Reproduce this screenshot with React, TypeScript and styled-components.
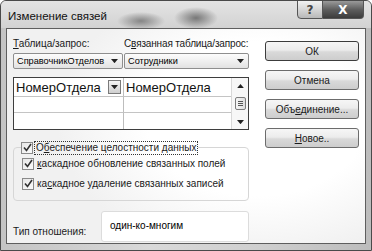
import styled, { createGlobalStyle } from "styled-components";

const GlobalStyle = createGlobalStyle`
  html, body { margin: 0; padding: 0; background: #ffffff; }
  body { font-family: "Liberation Sans", Arial, sans-serif; color: #1a1a1a; }
`;

const Window = styled.div`
  width: 372px;
  height: 251px;
  box-sizing: border-box;
  display: flex;
  flex-direction: column;
  border: 1px solid #4a4a4a;
  border-radius: 6px 6px 0 0;
  overflow: hidden;
  background: linear-gradient(90deg, #c4c4c4 0%, #d9d9d9 40%, #cfcfcf 70%, #bcbcbc 100%);
`;

const TitleBar = styled.div`
  height: 27px;
  display: flex;
  align-items: flex-start;
  padding-left: 7px;
  background:
    radial-gradient(ellipse 24px 9px at 140px 20px, #858585 0%, rgba(133,133,133,0) 100%),
    radial-gradient(ellipse 22px 11px at 195px 17px, #777 0%, rgba(119,119,119,0) 100%),
    linear-gradient(#e4e4e4 0%, #d2d2d2 100%);
`;

const Title = styled.span`
  font-family: "Liberation Sans", Arial, sans-serif;
  font-size: 11.5px;
  line-height: 30px;
  color: #111;
`;

const CaptionButtons = styled.div`
  margin-left: auto;
  margin-right: 7px;
  display: flex;
  margin-top: -1px;
`;

const CaptionButton = styled.div<{ $close?: boolean }>`
  width: ${(p) => (p.$close ? "41px" : "26px")};
  height: 19px;
  box-sizing: border-box;
  display: flex;
  align-items: center;
  justify-content: center;
  border: 1px solid #555;
  border-left: ${(p) => (p.$close ? "none" : "1px solid #555")};
  border-radius: ${(p) => (p.$close ? "0 0 4px 0" : "0 0 0 4px")};
  background: ${(p) =>
    p.$close
      ? "linear-gradient(#9a9a9a 0%, #5e5e5e 50%, #3c3c3c 100%)"
      : "linear-gradient(#f2f2f2 0%, #d6d6d6 50%, #b8b8b8 100%)"};
  color: ${(p) => (p.$close ? "#fff" : "#444")};
  font-family: "DejaVu Sans", sans-serif;
  font-weight: bold;
  font-size: 12px;
`;

const Body = styled.div`
  flex: 1;
  display: flex;
  padding: 0 5px 6px 5px;
`;

const Client = styled.div`
  flex: 1;
  display: flex;
  border: 1px solid #5e5e5e;
  padding: 8px 6px 0 6px;
  background: radial-gradient(ellipse 200px 140px at 250px 90px, #ffffff 55%, #f1f1f1 100%);
`;

const LeftColumn = styled.div`
  width: 236px;
  display: flex;
  flex-direction: column;
`;

const RightColumn = styled.div`
  margin-left: 16px;
  width: 94px;
  display: flex;
  flex-direction: column;
  gap: 9px;
  padding-top: 4px;
`;

const LabelRow = styled.div`
  display: grid;
  grid-template-columns: 111px 125px;
  height: 16px;
  font-size: 10px;
  line-height: 14px;
  white-space: nowrap;
  span:last-child {
    letter-spacing: -0.15px;
  }
`;

const ComboRow = styled.div`
  display: grid;
  grid-template-columns: 110px 125px;
  gap: 1px;
`;

const Combo = styled.div`
  height: 16px;
  box-sizing: border-box;
  display: flex;
  align-items: center;
  justify-content: space-between;
  padding: 0 4px 0 3px;
  border: 1px solid #8e8e8e;
  border-radius: 2px;
  background: linear-gradient(#fcfcfc 0%, #f0f0f0 50%, #e2e2e2 100%);
  font-size: 9.2px;
  color: #000;
  white-space: nowrap;
`;

const Arrow = ({ size = 7 }: { size?: number }) => (
  <svg width={size} height={size * 0.6} viewBox="0 0 10 6">
    <path d="M0 0 L10 0 L5 6 Z" fill="#222" />
  </svg>
);

const Grid = styled.div`
  margin-top: 8px;
  height: 53px;
  box-sizing: border-box;
  display: flex;
  border: 1px solid #3e3e3e;
  background: #fff;
`;

const Cells = styled.div`
  flex: 1;
  display: grid;
  grid-template-columns: 110px 1fr;
  grid-template-rows: 19px 16px 1fr;
`;

const Cell = styled.div<{ $last?: boolean }>`
  display: flex;
  align-items: center;
  padding-left: 2px;
  border-right: ${(p) => (p.$last ? "none" : "1px solid #bdbdbd")};
  border-bottom: 1px solid #c4c4c4;
  font-size: 13px;
  color: #111;
  &:nth-last-child(-n + 2) {
    border-bottom: none;
  }
`;

const DropButton = styled.div`
  margin-left: auto;
  margin-right: 2px;
  width: 13px;
  height: 14px;
  box-sizing: border-box;
  display: flex;
  align-items: center;
  justify-content: center;
  border: 1px solid #7a7a7a;
  background: linear-gradient(#f4f4f4, #cfcfcf);
`;

const Scrollbar = styled.div`
  width: 16px;
  border-left: 1px solid #d8d8d8;
  display: flex;
  flex-direction: column;
  align-items: center;
  justify-content: space-between;
  padding: 6px 0 5px;
  background: #f7f7f7;
`;

const Thumb = styled.div`
  width: 11px;
  height: 13px;
  box-sizing: border-box;
  border: 1px solid #7d7d7d;
  border-radius: 2px;
  background: linear-gradient(90deg, #f6f6f6, #dedede);
  display: flex;
  flex-direction: column;
  justify-content: center;
  align-items: center;
  gap: 1px;
  span {
    width: 5px;
    height: 1px;
    background: #555;
  }
`;

const Group = styled.fieldset`
  margin: 11px 0 0 0;
  padding: 0 0 0 8px;
  height: 60px;
  box-sizing: border-box;
  border: 1px solid #d6d6d6;
  border-radius: 4px;
  display: flex;
  flex-direction: column;
  gap: 7px;
`;

const Legend = styled.legend`
  padding: 0 1px 0 0;
  margin-left: -1px;
  margin-bottom: 3px;
`;

const CheckRow = styled.label<{ $focus?: boolean }>`
  display: flex;
  align-items: center;
  gap: 2px;
  height: 13px;
  font-size: 10px;
  color: #1a1a1a;
  white-space: nowrap;
  span {
    padding: 0 1px;
    outline: ${(p) => (p.$focus ? "1px dotted #333" : "none")};
    line-height: 12px;
  }
`;

const Box = styled.div`
  width: 12px;
  height: 12px;
  box-sizing: border-box;
  border: 1px solid #8a8a8a;
  background: linear-gradient(135deg, #e6e6e6, #fafafa);
  display: flex;
  align-items: center;
  justify-content: center;
`;

const CheckBox = () => (
  <Box>
    <svg width="9" height="9" viewBox="0 0 9 9">
      <path d="M1 4.5 L3.5 7.5 L8 1" stroke="#333" strokeWidth="1.6" fill="none" />
    </svg>
  </Box>
);

const RelationRow = styled.div`
  margin-top: 10px;
  display: flex;
  align-items: flex-end;
`;

const RelationLabel = styled.div`
  width: 88px;
  font-size: 10px;
  padding-bottom: 5px;
`;

const RelationBox = styled.div`
  width: 148px;
  height: 31px;
  box-sizing: border-box;
  border: 1px solid #dcdcdc;
  border-radius: 3px;
  background: #fff;
  padding: 8px 0 0 8px;
  font-size: 10px;
  color: #000;
`;

const Button = styled.div<{ $default?: boolean }>`
  height: 20px;
  box-sizing: border-box;
  display: flex;
  align-items: center;
  justify-content: center;
  border: 1px solid ${(p) => (p.$default ? "#3c3c3c" : "#6c6c6c")};
  border-radius: 3px;
  background: linear-gradient(#f6f6f6 0%, #ececec 45%, #d9d9d9 55%, #cdcdcd 100%);
  font-size: 10px;
  color: #1a1a1a;
`;

const Key = styled.u`
  text-decoration-thickness: 1px;
  text-underline-offset: 1px;
`;

export default function App() {
  return (
    <>
      <GlobalStyle />
      <Window>
        <TitleBar>
          <Title>Изменение связей</Title>
          <CaptionButtons>
            <CaptionButton>?</CaptionButton>
            <CaptionButton $close>X</CaptionButton>
          </CaptionButtons>
        </TitleBar>
        <Body>
          <Client>
            <LeftColumn>
              <LabelRow>
                <span>
                  <Key>Т</Key>аблица/запрос:
                </span>
                <span>
                  С<Key>в</Key>язанная таблица/запрос:
                </span>
              </LabelRow>
              <ComboRow>
                <Combo>
                  СправочникОтделов <Arrow />
                </Combo>
                <Combo>
                  Сотрудники <Arrow />
                </Combo>
              </ComboRow>
              <Grid>
                <Cells>
                  <Cell>
                    НомерОтдела
                    <DropButton>
                      <Arrow size={7} />
                    </DropButton>
                  </Cell>
                  <Cell $last>НомерОтдела</Cell>
                  <Cell />
                  <Cell $last />
                  <Cell />
                  <Cell $last />
                </Cells>
                <Scrollbar>
                  <svg width="7" height="4" viewBox="0 0 10 6">
                    <path d="M0 6 L10 6 L5 0 Z" fill="#222" />
                  </svg>
                  <Thumb>
                    <span />
                    <span />
                    <span />
                  </Thumb>
                  <Arrow size={7} />
                </Scrollbar>
              </Grid>
              <Group>
                <Legend>
                  <CheckRow $focus>
                    <CheckBox />
                    <span>
                      О<Key>б</Key>еспечение целостности данных
                    </span>
                  </CheckRow>
                </Legend>
                <CheckRow>
                  <CheckBox />
                  <span>
                    <Key>к</Key>аскадное обновление связанных полей
                  </span>
                </CheckRow>
                <CheckRow>
                  <CheckBox />
                  <span>
                    ка<Key>с</Key>кадное удаление связанных записей
                  </span>
                </CheckRow>
              </Group>
              <RelationRow>
                <RelationLabel>Тип отношения:</RelationLabel>
                <RelationBox>один-ко-многим</RelationBox>
              </RelationRow>
            </LeftColumn>
            <RightColumn>
              <Button $default>ОК</Button>
              <Button>Отмена</Button>
              <Button>
                Объ<Key>е</Key>динение...
              </Button>
              <Button>
                <Key>Н</Key>овое..
              </Button>
            </RightColumn>
          </Client>
        </Body>
      </Window>
    </>
  );
}
